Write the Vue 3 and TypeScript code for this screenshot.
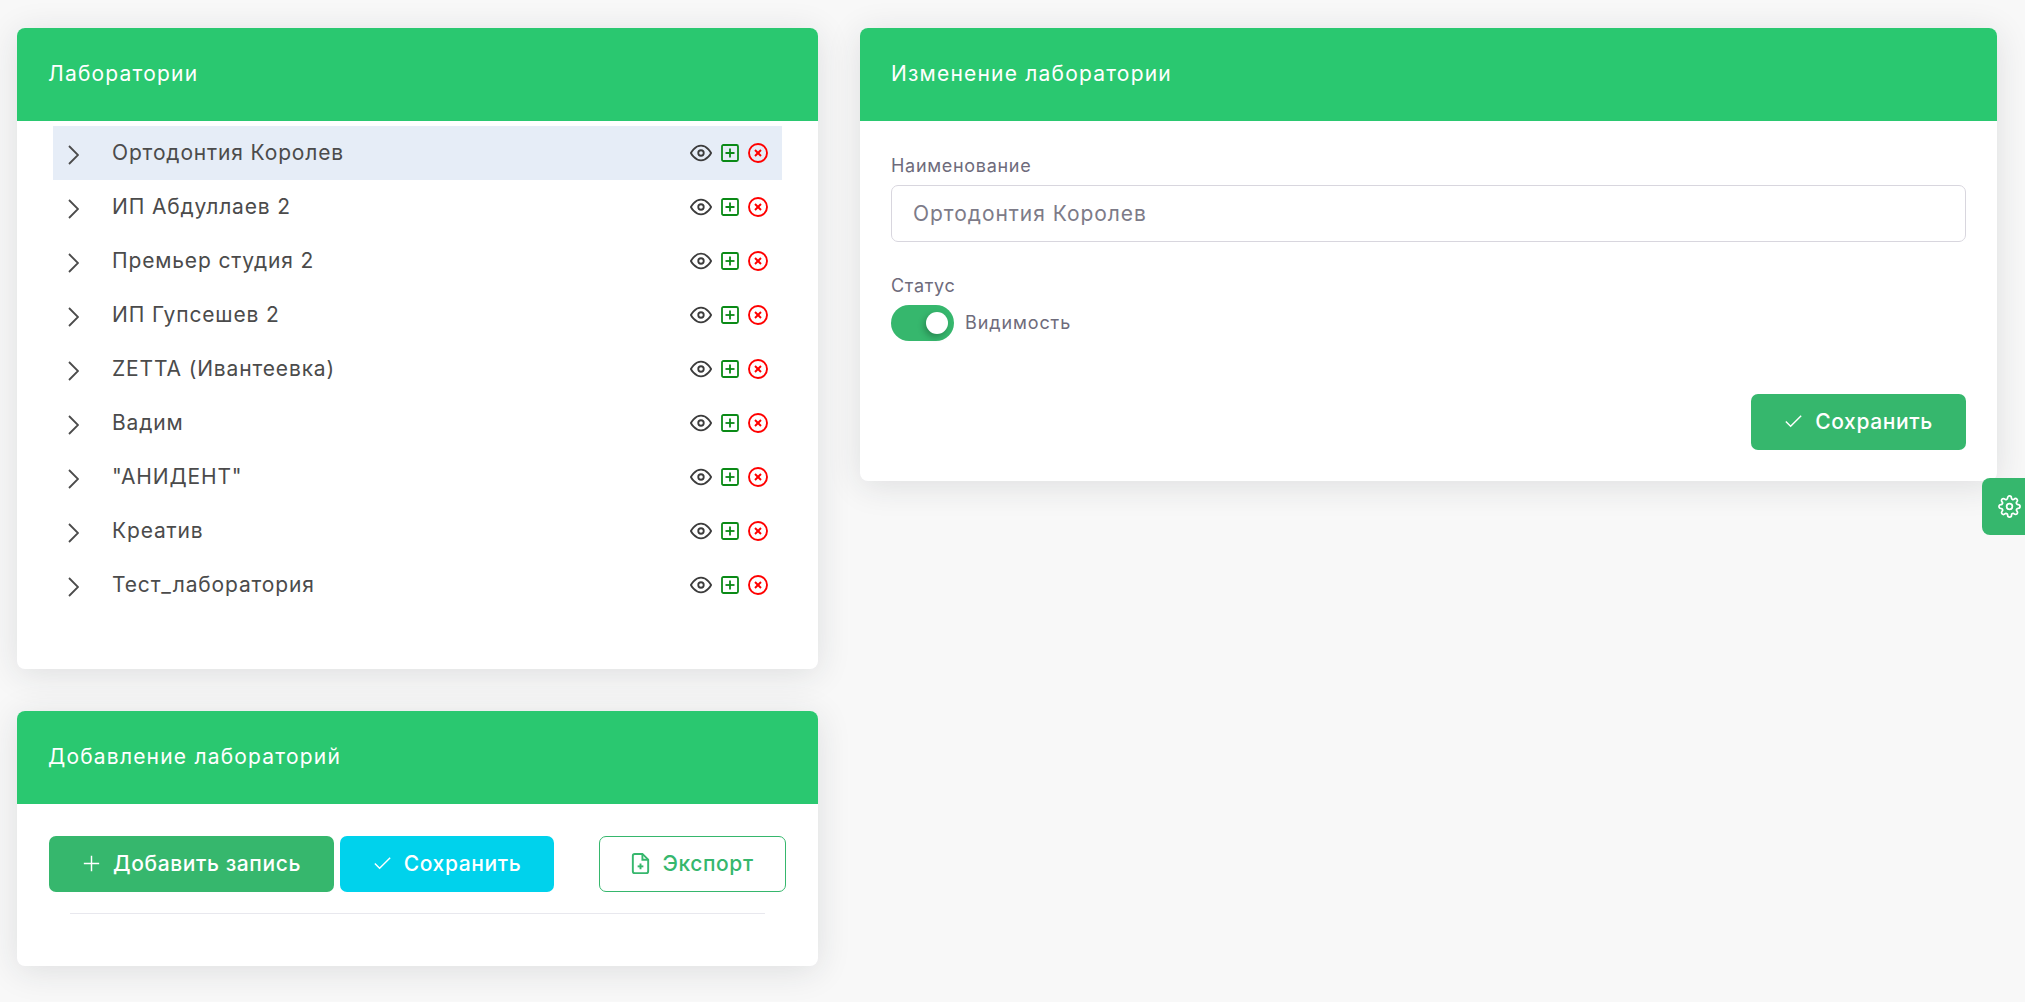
<template>
  <div class="page">
    <div class="column">
      <section class="card">
        <header class="card-header">Лаборатории</header>
        <ul class="tree">
          <li
            v-for="(lab, index) in labs"
            :key="lab"
            class="tree-row"
            :class="{ active: index === 0 }"
          >
            <svg class="chevron" viewBox="0 0 11 20"><polyline points="1,1 10,10 1,19" /></svg>
            <span class="tree-name">{{ lab }}</span>
            <span class="tree-actions">
              <svg class="icon eye" viewBox="0 0 24 24">
                <path d="M1 12s4-8 11-8 11 8 11 8-4 8-11 8-11-8-11-8z" />
                <circle cx="12" cy="12" r="3" />
              </svg>
              <svg class="icon add" viewBox="0 0 18 18">
                <rect x="1" y="1" width="16" height="16" rx="1.5" />
                <line x1="9" y1="4.5" x2="9" y2="13.5" />
                <line x1="4.5" y1="9" x2="13.5" y2="9" />
              </svg>
              <svg class="icon remove" viewBox="0 0 20 20">
                <circle cx="10" cy="10" r="9" />
                <line x1="7" y1="7" x2="13" y2="13" />
                <line x1="13" y1="7" x2="7" y2="13" />
              </svg>
            </span>
          </li>
        </ul>
      </section>

      <section class="card">
        <header class="card-header">Добавление лабораторий</header>
        <div class="add-body">
          <div class="add-actions">
            <button class="btn btn-green add-btn" type="button">
              <svg class="btn-icon" viewBox="0 0 24 24">
                <line x1="12" y1="4" x2="12" y2="20" />
                <line x1="4" y1="12" x2="20" y2="12" />
              </svg>
              Добавить запись
            </button>
            <button class="btn btn-cyan" type="button">
              <svg class="btn-icon" viewBox="0 0 24 24"><polyline points="20 6 9 17 4 12" /></svg>
              Сохранить
            </button>
            <button class="btn btn-outline" type="button">
              <svg class="btn-icon file-icon" viewBox="0 0 24 24">
                <path d="M14 2H6a2 2 0 0 0-2 2v16a2 2 0 0 0 2 2h12a2 2 0 0 0 2-2V8z" />
                <polyline points="14 2 14 8 20 8" />
                <line x1="12" y1="18" x2="12" y2="12" />
                <line x1="9" y1="15" x2="15" y2="15" />
              </svg>
              Экспорт
            </button>
          </div>
          <hr class="divider" />
        </div>
      </section>
    </div>

    <section class="card edit-card">
      <header class="card-header">Изменение лаборатории</header>
      <div class="edit-body">
        <label class="field-label">Наименование</label>
        <input class="field-input" type="text" readonly placeholder="Ортодонтия Королев" />
        <label class="field-label status-label">Статус</label>
        <div class="switch-row">
          <span class="switch"><span class="knob"></span></span>
          <span class="switch-text">Видимость</span>
        </div>
        <div class="edit-footer">
          <button class="btn btn-green save-btn" type="button">
            <svg class="btn-icon" viewBox="0 0 24 24"><polyline points="20 6 9 17 4 12" /></svg>
            Сохранить
          </button>
        </div>
      </div>
    </section>

    <div class="settings-tab">
      <svg viewBox="0 0 24 24">
        <circle cx="12" cy="12" r="3" />
        <path d="M19.4 15a1.65 1.65 0 0 0 .33 1.82l.06.06a2 2 0 0 1 0 2.83 2 2 0 0 1-2.83 0l-.06-.06a1.65 1.65 0 0 0-1.82-.33 1.65 1.65 0 0 0-1 1.51V21a2 2 0 0 1-2 2 2 2 0 0 1-2-2v-.09A1.65 1.65 0 0 0 9 19.4a1.65 1.65 0 0 0-1.82.33l-.06.06a2 2 0 0 1-2.83 0 2 2 0 0 1 0-2.83l.06-.06a1.65 1.65 0 0 0 .33-1.82 1.65 1.65 0 0 0-1.51-1H3a2 2 0 0 1-2-2 2 2 0 0 1 2-2h.09A1.65 1.65 0 0 0 4.6 9a1.65 1.65 0 0 0-.33-1.82l-.06-.06a2 2 0 0 1 0-2.83 2 2 0 0 1 2.83 0l.06.06a1.65 1.65 0 0 0 1.82.33H9a1.65 1.65 0 0 0 1-1.51V3a2 2 0 0 1 2-2 2 2 0 0 1 2 2v.09a1.65 1.65 0 0 0 1 1.51 1.65 1.65 0 0 0 1.82-.33l.06-.06a2 2 0 0 1 2.83 0 2 2 0 0 1 0 2.83l-.06.06a1.65 1.65 0 0 0-.33 1.82V9a1.65 1.65 0 0 0 1.51 1H21a2 2 0 0 1 2 2 2 2 0 0 1-2 2h-.09a1.65 1.65 0 0 0-1.51 1z" />
      </svg>
    </div>
  </div>
</template>

<script setup lang="ts">
const labs: string[] = [
  'Ортодонтия Королев',
  'ИП Абдуллаев 2',
  'Премьер студия 2',
  'ИП Гупсешев 2',
  'ZETTA (Ивантеевка)',
  'Вадим',
  '"АНИДЕНТ"',
  'Креатив',
  'Тест_лаборатория'
]
</script>

<style>
html,
body {
  background: #f8f8f8;
  overflow: hidden;
}
</style>

<style scoped>
.page {
  position: relative;
  height: 1002px;
  box-sizing: border-box;
  padding: 28px 28px 0 17px;
  display: flex;
  align-items: flex-start;
  gap: 42px;
  font-family: Inter, "Noto Sans", sans-serif;
  color: #4b4b4b;
}

.column {
  width: 801px;
  display: flex;
  flex-direction: column;
  gap: 42px;
}

.card {
  background: #fff;
  border-radius: 8px;
  box-shadow: 0 5px 34px rgba(34, 41, 47, 0.12);
  overflow: hidden;
}

.card-header {
  height: 93px;
  box-sizing: border-box;
  padding: 0 31px 2px;
  display: flex;
  align-items: center;
  background: #2ac870;
  color: #fff;
  font-size: 21px;
  letter-spacing: 1.2px;
}

.tree {
  list-style: none;
  margin: 0;
  padding: 5px 36px 57px;
}

.tree-row {
  height: 54px;
  display: flex;
  align-items: center;
  padding: 0 14px 0 15px;
  font-size: 21px;
  letter-spacing: 0.85px;
  color: #4b4b4b;
}

.tree-row.active {
  background: #e6edf7;
}

.chevron {
  width: 11px;
  height: 20px;
  margin-top: 3px;
  fill: none;
  stroke: #4b4b4b;
  stroke-width: 1.8;
}

.tree-name {
  margin-left: 33px;
  padding-bottom: 2px;
}

.tree-actions {
  margin-left: auto;
  display: flex;
  align-items: center;
  gap: 9px;
}

.icon {
  display: block;
  fill: none;
}

.eye {
  width: 22px;
  height: 22px;
  stroke: #3c3c3c;
  stroke-width: 2;
}

.add {
  width: 18px;
  height: 18px;
  stroke: #0a8a16;
  stroke-width: 1.8;
}

.remove {
  width: 20px;
  height: 20px;
  stroke: #ff0000;
  stroke-width: 1.9;
}

.btn {
  height: 56px;
  box-sizing: border-box;
  padding: 0 2px 1px 0;
  display: inline-flex;
  align-items: center;
  justify-content: center;
  gap: 10px;
  border: 0;
  border-radius: 7px;
  font-family: inherit;
  font-size: 21px;
  font-weight: 500;
  letter-spacing: 0.6px;
  color: #fff;
}

.btn-icon {
  width: 23px;
  height: 23px;
  fill: none;
  stroke: currentColor;
  stroke-width: 1.5;
}

.file-icon {
  stroke-width: 2;
}

.btn-green {
  background: #36b76d;
}

.btn-cyan {
  width: 214px;
  background: #00d2ec;
}

.btn-outline {
  width: 187px;
  margin-left: auto;
  background: #fff;
  border: 1px solid #36b76d;
  color: #36b76d;
}

.add-body {
  padding: 32px 32px 52px;
}

.add-actions {
  display: flex;
  gap: 6px;
}

.add-btn {
  width: 285px;
}

.divider {
  margin: 21px 21px 0;
  border: 0;
  border-top: 1px solid #e8e8ee;
}

.edit-card {
  width: 1137px;
}

.edit-body {
  padding: 33px 31px 31px;
  display: flex;
  flex-direction: column;
  align-items: flex-start;
}

.field-label {
  font-size: 18px;
  line-height: 24px;
  letter-spacing: 0.7px;
  color: #6e6b7b;
}

.field-input {
  width: 100%;
  height: 57px;
  box-sizing: border-box;
  margin-top: 7px;
  padding: 0 21px;
  border: 1px solid #d8d6de;
  border-radius: 7px;
  outline: none;
  font-family: inherit;
  font-size: 21px;
  letter-spacing: 0.95px;
  color: #6e6b7b;
}

.field-input::placeholder {
  color: #7d7b88;
  opacity: 1;
}

.status-label {
  margin-top: 32px;
}

.switch-row {
  margin-top: 7px;
  display: flex;
  align-items: center;
  gap: 11px;
}

.switch {
  position: relative;
  width: 63px;
  height: 36px;
  border-radius: 18px;
  background: #36b76d;
}

.knob {
  position: absolute;
  top: 7px;
  right: 6px;
  width: 22px;
  height: 22px;
  border-radius: 50%;
  background: #fff;
  box-shadow: -2px 3px 6px rgba(0, 0, 0, 0.25);
}

.switch-text {
  padding-bottom: 2px;
  font-size: 18px;
  letter-spacing: 0.9px;
  color: #6e6b7b;
}

.edit-footer {
  width: 100%;
  margin-top: 53px;
  display: flex;
  justify-content: flex-end;
}

.save-btn {
  width: 215px;
}

.settings-tab {
  position: absolute;
  top: 478px;
  right: 0;
  width: 43px;
  height: 57px;
  display: flex;
  align-items: center;
  justify-content: flex-end;
  background: #36b76d;
  border-radius: 8px 0 0 8px;
}

.settings-tab svg {
  width: 23px;
  height: 23px;
  margin-right: 4px;
  fill: none;
  stroke: #fff;
  stroke-width: 1.8;
}
</style>
